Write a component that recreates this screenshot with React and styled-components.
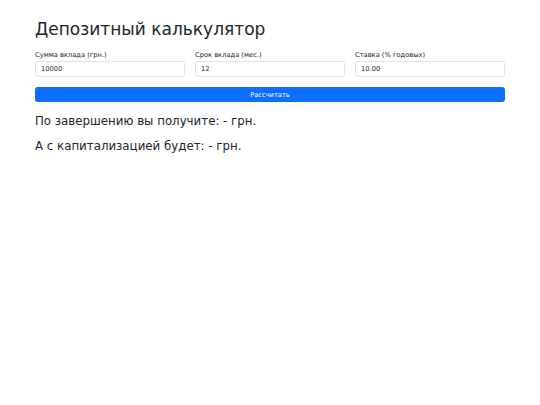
import { useState } from 'react';
import styled, { createGlobalStyle } from 'styled-components';

const GlobalStyle = createGlobalStyle`
  * { box-sizing: border-box; }
  body {
    margin: 0;
    background: #fff;
    color: #212529;
    font-family: "DejaVu Sans", sans-serif;
  }
`;

const Page = styled.main`
  padding: 19px 35px 0;
`;

const Title = styled.h1`
  margin: 0 0 11.5px;
  font-size: 17px;
  font-weight: 400;
  line-height: 1.2;
`;

const Fields = styled.div`
  display: grid;
  grid-template-columns: repeat(3, 1fr);
  gap: 10px;
`;

const Field = styled.label`
  display: flex;
  flex-direction: column;
  gap: 2px;
  font-size: 6.7px;
  line-height: 8px;
`;

const Input = styled.input`
  height: 16px;
  padding: 0 5px;
  border: 1px solid #dee2e6;
  border-radius: 3px;
  font-family: inherit;
  font-size: 6.7px;
  color: #212529;
  outline: none;
`;

const Button = styled.button`
  display: block;
  width: 100%;
  height: 15.5px;
  margin-top: 10px;
  border: none;
  border-radius: 3px;
  background: #0d6efd;
  color: #fff;
  font-family: inherit;
  font-size: 6.7px;
  cursor: pointer;
`;

const Result = styled.p`
  margin: ${p => (p.first ? '11px' : '0')} 0 9px;
  font-size: 11.8px;
  line-height: 16px;
`;

export default function App() {
  const [amount, setAmount] = useState('10000');
  const [months, setMonths] = useState('12');
  const [rate, setRate] = useState('10.00');

  return (
    <>
      <GlobalStyle />
      <Page>
        <Title>Депозитный калькулятор</Title>
        <Fields>
          <Field>
            Сумма вклада (грн.)
            <Input value={amount} onChange={e => setAmount(e.target.value)} />
          </Field>
          <Field>
            Срок вклада (мес.)
            <Input value={months} onChange={e => setMonths(e.target.value)} />
          </Field>
          <Field>
            Ставка (% годовых)
            <Input value={rate} onChange={e => setRate(e.target.value)} />
          </Field>
        </Fields>
        <Button>Рассчитать</Button>
        <Result first>По завершению вы получите: - грн.</Result>
        <Result>А с капитализацией будет: - грн.</Result>
      </Page>
    </>
  );
}
